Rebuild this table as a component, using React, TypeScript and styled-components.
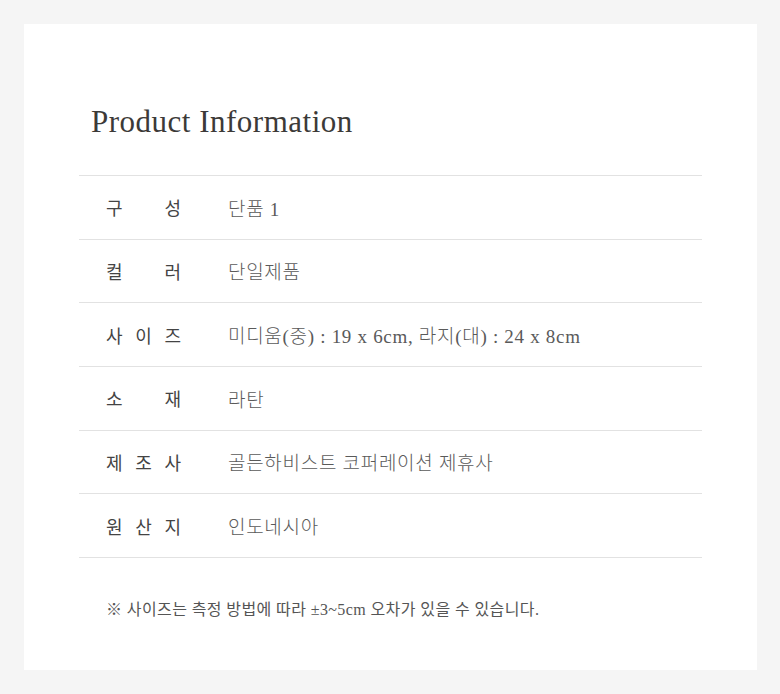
import styled, { createGlobalStyle } from "styled-components";

const GlobalStyle = createGlobalStyle`
  html, body {
    margin: 0;
    padding: 0;
    background: #f5f5f5;
  }
  body {
    font-family: "Liberation Serif", "Noto Sans CJK KR", serif;
  }
`;

const Page = styled.div`
  width: 780px;
  height: 694px;
  padding: 24px 23px 24px 24px;
  box-sizing: border-box;
`;

const Card = styled.section`
  background: #fff;
  height: 646px;
  padding: 82px 55px 0 55px;
  box-sizing: border-box;
`;

const Title = styled.h2`
  margin: 0 0 0 12px;
  font-family: "Liberation Serif", serif;
  font-weight: 400;
  font-size: 31px;
  line-height: 32px;
  color: #3c3a38;
  letter-spacing: 0.5px;
`;

const Table = styled.div`
  margin-top: 37px;
  border-top: 1px solid #e2e2e2;
`;

const Row = styled.div`
  display: flex;
  align-items: center;
  height: 62.67px;
  border-bottom: 1px solid #e2e2e2;
  padding-left: 27px;
`;

const Label = styled.div`
  width: 75px;
  display: flex;
  justify-content: space-between;
  font-family: "Noto Sans CJK KR", sans-serif;
  font-weight: 400;
  font-size: 18px;
  color: #444;
  margin-right: 47px;
`;

const Value = styled.div`
  font-family: "Liberation Serif", "Noto Sans CJK KR", serif;
  font-size: 19px;
  letter-spacing: 0.7px;
  color: #5a5a5a;
  font-weight: 300;
`;

const Note = styled.p`
  margin: 38px 0 0 27px;
  font-family: "Liberation Serif", "Noto Sans CJK KR", serif;
  font-size: 16px;
  letter-spacing: 0.4px;
  color: #555;
`;

const rows = [
  { label: "구성", value: "단품 1" },
  { label: "컬러", value: "단일제품" },
  { label: "사이즈", value: "미디움(중) : 19 x 6cm, 라지(대) : 24 x 8cm" },
  { label: "소재", value: "라탄" },
  { label: "제조사", value: "골든하비스트 코퍼레이션 제휴사" },
  { label: "원산지", value: "인도네시아" },
];

export default function App() {
  return (
    <>
      <GlobalStyle />
      <Page>
        <Card>
          <Title>Product Information</Title>
          <Table>
            {rows.map((r) => (
              <Row key={r.label}>
                <Label>
                  {r.label.split("").map((c, i) => (
                    <span key={i}>{c}</span>
                  ))}
                </Label>
                <Value>{r.value}</Value>
              </Row>
            ))}
          </Table>
          <Note>※ 사이즈는 측정 방법에 따라 ±3~5cm 오차가 있을 수 있습니다.</Note>
        </Card>
      </Page>
    </>
  );
}
